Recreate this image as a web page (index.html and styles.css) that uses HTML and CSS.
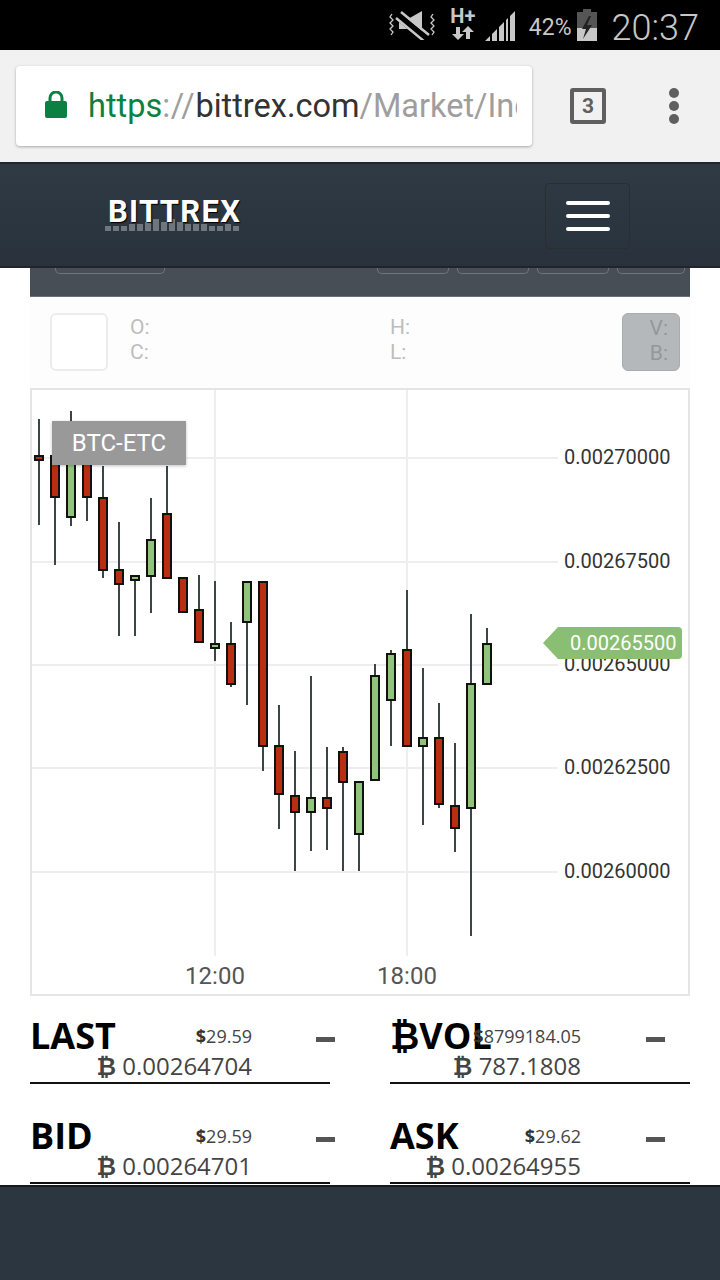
FILE: index.html
```html
<!DOCTYPE html>
<html lang="en">
<head>
<meta charset="utf-8">
<title>BTC-ETC</title>
<link rel="stylesheet" href="styles.css">
</head>
<body>
<div class="screen">
  <div class="statusbar">
    <svg class="st-mute" viewBox="0 0 46 32" width="46" height="32">
      <path class="st-fill" d="M10 11h9L33 3v26L19 21h-9z"/>
      <path class="st-gap" d="M9 8l29 24"/>
      <path class="st-line" d="M12 4l28 23M7 10l29 24"/>
      <path class="st-thin" d="M3 6l-2 3 3 3-3 3 3 3-3 3 3 3-2 3M44 6l-2 3 3 3-3 3 3 3-3 3 3 3-2 3"/>
    </svg>
    <div class="st-net">
      <span class="st-h">H+</span>
      <svg viewBox="0 0 24 14" width="24" height="14"><path class="st-fill" d="M7 14l-6-6h4V1h4v7h4zM17 0l6 6h-4v7h-4V6h-4z"/></svg>
    </div>
    <svg class="st-sig" viewBox="0 0 32 32" width="32" height="32">
      <path class="st-fill" d="M0 31l5-5v5zM7 31v-7l5-5v12zM14 31V17l5-5v19zM21 31V10l2-2v23zM25 31V6l5-5v30z"/>
    </svg>
    <span class="st-pct">42%</span>
    <svg class="st-bat" viewBox="0 0 20 32" width="20" height="32">
      <path class="st-bat-body" d="M6 0h8v3h6v29H0V3h6z"/>
      <path class="st-bat-level" d="M0 19h20v13H0z"/>
      <path class="st-bat-bolt" d="M12 7l-7 13h4l-3 10 9-14h-5l4-9z"/>
    </svg>
    <span class="st-time">20:37</span>
  </div>

  <div class="toolbar">
    <div class="urlbox">
      <svg class="lock" viewBox="0 0 22 27" width="22" height="27"><path d="M5 11V7a6 6 0 0 1 12 0v4" class="lock-arc"/><rect class="lock-body" x="0" y="10" width="22" height="17" rx="2"/></svg>
      <div class="url"><span class="u-green">https</span><span class="u-grey u-sep">://</span><span class="u-dark">bittrex.com</span><span class="u-grey">/Market/Index?MarketName=BTC-ETC</span></div>
    </div>
    <div class="tabs">3</div>
    <div class="dots"><i></i><i></i><i></i></div>
  </div>

  <header class="nav">
    <div class="logo">
      <svg class="logo-bars" viewBox="0 0 138 14" width="138" height="14">
        <path d="M0 9h6v5H0zM8 9h6v5H8zM16 9h6v5h-6zM24 7h6v7h-6zM32 7h6v7h-6zM40 5h6v9h-6zM48 2h6v12h-6zM56 5h6v9h-6zM64 2h6v12h-6zM72 5h6v9h-6zM80 7h6v7h-6zM88 7h6v7h-6zM96 7h6v7h-6zM104 9h6v5h-6zM112 9h6v5h-6zM120 7h6v7h-6zM128 9h6v5h-6z"/>
      </svg>
      <span class="logo-text">BITTREX</span>
    </div>
    <div class="burger"><i></i><i></i><i></i></div>
  </header>

  <main class="content">
    <div class="strip">
      <span class="sbtn sbtn-wide"></span>
      <span class="strip-right">
        <span class="sbtn"></span><span class="sbtn"></span><span class="sbtn"></span><span class="sbtn sbtn-last"></span>
      </span>
    </div>

    <div class="ohlc">
      <div class="swatch"></div>
      <div class="ohlc-col"><span>O:</span><span>C:</span></div>
      <div class="ohlc-col"><span>H:</span><span>L:</span></div>
      <div class="vb"><span>V:</span><span>B:</span></div>
    </div>

    <div class="chart">
      <svg class="chart-svg" viewBox="32 390 656 604" width="656" height="604">
        <g class="grid">
          <path d="M32 458H558M32 562H558M32 665H558M32 768H558M32 872H558M215 390V956M407 390V956"/>
        </g>
        <g class="wicks">
          <path d="M39 419V525M55 456V565M71 411V526M87 456V521M103 466V578M119 522V636M135 576V636M151 498V613M167 466V578M183 578V612M199 575V642M215 581V661M231 622V687M247 581V705M263 581V771M279 705V829M295 751V871M311 676V851M327 747V850M343 747V871M359 781V871M375 664V781M391 650V746M407 590V746M423 668V825M439 703V808M455 743V852M471 614V936M487 628V684"/>
        </g>
        <g class="red">
          <rect x="35" y="456" width="8" height="4"/>
          <rect x="51" y="456" width="8" height="41"/>
          <rect x="83" y="456" width="8" height="41"/>
          <rect x="99" y="498" width="8" height="72"/>
          <rect x="115" y="570" width="8" height="14"/>
          <rect x="163" y="514" width="8" height="64"/>
          <rect x="179" y="578" width="8" height="34"/>
          <rect x="195" y="610" width="8" height="32"/>
          <rect x="227" y="644" width="8" height="40"/>
          <rect x="259" y="582" width="8" height="164"/>
          <rect x="275" y="746" width="8" height="48"/>
          <rect x="291" y="796" width="8" height="16"/>
          <rect x="323" y="798" width="8" height="10"/>
          <rect x="339" y="752" width="8" height="30"/>
          <rect x="403" y="650" width="8" height="96"/>
          <rect x="435" y="738" width="8" height="66"/>
          <rect x="451" y="806" width="8" height="22"/>
        </g>
        <g class="green">
          <rect x="67" y="456" width="8" height="61"/>
          <rect x="131" y="576" width="8" height="4"/>
          <rect x="147" y="540" width="8" height="36"/>
          <rect x="211" y="644" width="8" height="4"/>
          <rect x="243" y="582" width="8" height="40"/>
          <rect x="307" y="798" width="8" height="14"/>
          <rect x="355" y="782" width="8" height="52"/>
          <rect x="371" y="676" width="8" height="104"/>
          <rect x="387" y="654" width="8" height="46"/>
          <rect x="419" y="738" width="8" height="8"/>
          <rect x="467" y="684" width="8" height="124"/>
          <rect x="483" y="644" width="8" height="40"/>
        </g>
        <g class="yaxis">
          <text x="564" y="464">0.00270000</text>
          <text x="564" y="568">0.00267500</text>
          <text x="564" y="671">0.00265000</text>
          <text x="564" y="774">0.00262500</text>
          <text x="564" y="878">0.00260000</text>
        </g>
        <g class="xaxis">
          <text x="215" y="984">12:00</text>
          <text x="407" y="984">18:00</text>
        </g>
        <path class="tag" d="M558 627H678a4 4 0 0 1 4 4V655a4 4 0 0 1-4 4H558L543 643z"/>
        <text class="tag-text" x="570" y="650">0.00265500</text>
      </svg>
      <div class="legend">BTC-ETC</div>
    </div>

    <div class="stats">
      <section class="stat stat-l">
        <h2>LAST</h2>
        <div class="stat-vals"><div class="usd"><b>$</b>29.59</div><div class="btc"><b>₿</b> 0.00264704</div></div>
        <span class="dash"></span>
      </section>
      <section class="stat stat-r">
        <h2>₿VOL</h2>
        <div class="stat-vals"><div class="usd"><b>$</b>8799184.05</div><div class="btc"><b>₿</b> 787.1808</div></div>
        <span class="dash"></span>
      </section>
      <section class="stat stat-l">
        <h2>BID</h2>
        <div class="stat-vals"><div class="usd"><b>$</b>29.59</div><div class="btc"><b>₿</b> 0.00264701</div></div>
        <span class="dash"></span>
      </section>
      <section class="stat stat-r">
        <h2>ASK</h2>
        <div class="stat-vals"><div class="usd"><b>$</b>29.62</div><div class="btc"><b>₿</b> 0.00264955</div></div>
        <span class="dash"></span>
      </section>
    </div>
  </main>

  <footer class="foot"></footer>
</div>
</body>
</html>
```

FILE: styles.css
```css
* { box-sizing: border-box; }
html, body { margin: 0; padding: 0; background: #fff; }
.screen { width: 720px; height: 1280px; overflow: hidden; display: flex; flex-direction: column; font-family: Roboto, "Liberation Sans", sans-serif; }

/* status bar */
.statusbar { height: 50px; flex: none; background: #000; display: flex; align-items: center; justify-content: flex-end; padding-right: 21px; color: #c8c8c8; }
.st-mute { margin-right: 15px; margin-top: -2px; }
.st-fill { fill: #c8c8c8; }
.st-gap { stroke: #000; stroke-width: 8; fill: none; }
.st-line { stroke: #c8c8c8; stroke-width: 2.5; fill: none; }
.st-thin { stroke: #c8c8c8; stroke-width: 1.3; fill: none; }
.st-net { width: 26px; display: flex; flex-direction: column; align-items: center; margin-right: 9px; margin-top: -4px; }
.st-h { font-size: 20px; line-height: 20px; font-weight: 700; }
.st-sig { margin-right: 12px; margin-top: 1px; }
.st-pct { font-size: 23px; margin-right: 5px; margin-top: 5px; }
.st-bat { margin-right: 15px; }
.st-bat-body { fill: #555; }
.st-bat-level { fill: #c8c8c8; }
.st-bat-bolt { fill: #222; }
.st-time { font-size: 36px; font-weight: 300; margin-top: 5px; }

/* browser toolbar */
.toolbar { height: 112px; flex: none; background: #f1f1f1; display: flex; align-items: center; padding: 0 0 0 16px; position: relative; }
.urlbox { width: 516px; height: 80px; background: #fff; border-radius: 4px; box-shadow: 0 1px 3px rgba(0,0,0,.3); display: flex; align-items: center; padding: 0 15px 0 29px; }
.lock { flex: none; margin-right: 21px; margin-top: -4px; }
.lock-arc { fill: none; stroke: #0b8043; stroke-width: 3; }
.lock-body { fill: #0b8043; }
.url { font-size: 32.5px; white-space: nowrap; overflow: hidden; flex: 1; line-height: 42px; }
.u-green { color: #0b8043; }
.u-grey { color: #9e9e9e; }
.u-sep { letter-spacing: 0.7px; }
.u-dark { color: #333; }
.tabs { width: 36px; height: 36px; border: 4px solid #5f5f5f; border-radius: 3px; margin-left: 38px; font-size: 21px; font-weight: 700; color: #5f5f5f; display: flex; align-items: center; justify-content: center; }
.dots { margin-left: 63px; display: flex; flex-direction: column; gap: 3px; }
.dots i { display: block; width: 10px; height: 10px; border-radius: 50%; background: #5f5f5f; }

/* site nav */
.nav { height: 106px; flex: none; background: linear-gradient(#2f3a44, #29323c); border-top: 2px solid #20272e; border-bottom: 2px solid #1f252c; display: flex; justify-content: space-between; padding: 0 90px 0 105px; position: relative; z-index: 2; }
.logo { position: relative; width: 138px; height: 70px; margin-top: 30px; }
.logo-bars { position: absolute; left: 0; top: 23px; fill: #6f767c; }
.logo-text { position: absolute; left: 3px; top: 0; font-size: 31px; line-height: 36px; font-weight: 700; color: #fff; letter-spacing: 1.3px; text-shadow: 1px 1px 1px #000; }
.burger { width: 85px; height: 66px; margin-top: 19px; border: 1px solid #2b2d32; border-radius: 4px; display: flex; flex-direction: column; align-items: center; justify-content: center; gap: 9px; }
.burger i { display: block; width: 44px; height: 4px; border-radius: 2px; background: #fff; }

/* page content */
.content { flex: 1; min-height: 0; overflow: hidden; padding: 0 30px; background: #fff; }
.strip { height: 29px; background: #474e55; display: flex; justify-content: space-between; padding: 0 5px 0 25px; border-bottom: 1px solid #6a7076; }
.strip-right { display: flex; gap: 8px; }
.sbtn { display: block; width: 72px; height: 6px; border: 1px solid #70767c; border-top: 0; border-radius: 0 0 5px 5px; }
.sbtn-wide { width: 110px; }
.sbtn-last { width: 68px; }

.ohlc { height: 91px; background: #fdfdfd; display: flex; align-items: flex-start; padding: 16px 10px 0 20px; font-size: 21px; line-height: 25px; color: #bdbdbd; }
.swatch { width: 58px; height: 58px; background: #fff; border: 2px solid #ececec; border-radius: 6px; flex: none; margin-right: 22px; }
.ohlc-col { width: 260px; flex: none; display: flex; flex-direction: column; padding-top: 2px; }
.vb { width: 58px; height: 58px; margin-left: -28px; background: #b5b8ba; border: 1px solid #a9acae; border-radius: 6px; display: flex; flex-direction: column; align-items: flex-end; padding: 2px 11px 0 0; color: #949799; }

.chart { height: 608px; border: 2px solid #e5e5e5; position: relative; background: #fff; }
.chart-svg { display: block; }
.grid path { stroke: #eeeeee; stroke-width: 2; fill: none; }
.wicks path { stroke: #3a4545; stroke-width: 2; fill: none; }
.red rect { fill: #b82e10; stroke: #111; stroke-width: 2; }
.green rect { fill: #8fc47a; stroke: #111; stroke-width: 2; }
.yaxis text { font-size: 20px; fill: #333; font-family: Roboto, sans-serif; }
.xaxis text { font-size: 24px; fill: #555; text-anchor: middle; font-family: Roboto, sans-serif; }
.tag { fill: #8abf73; }
.tag-text { font-size: 20px; fill: #fff; font-family: Roboto, sans-serif; }
.legend { position: absolute; left: 20px; top: 31px; width: 134px; height: 44px; background: #999; color: #fff; font-size: 24px; line-height: 44px; text-align: center; box-shadow: 0 1px 3px rgba(0,0,0,.25); }

/* stats */
.stats { display: grid; grid-template-columns: 300px 300px; column-gap: 60px; row-gap: 12px; grid-template-rows: 88px 88px; font-family: "Open Sans", sans-serif; }
.stat { height: 88px; border-bottom: 2px solid #111; position: relative; }
.stat h2 { margin: 0; position: absolute; left: 0; top: 18px; font-size: 36px; line-height: 44px; font-weight: 700; color: #000; }
.stat-vals { position: absolute; top: 27px; text-align: right; color: #444; }
.stat-l .stat-vals { right: 78px; }
.stat-r .stat-vals { right: 109px; }
.usd { font-size: 18px; line-height: 26px; }
.usd b { font-weight: 700; color: #333; }
.btc { font-size: 24px; line-height: 34px; white-space: nowrap; }
.btc b { font-weight: 700; font-family: "DejaVu Sans", sans-serif; }
.dash { position: absolute; left: 286px; top: 41px; width: 19px; height: 5px; background: #555; }
.stat-r .dash { left: 256px; }

.foot { height: 95px; flex: none; background: #2b3640; border-top: 2px solid #14191e; }
```
